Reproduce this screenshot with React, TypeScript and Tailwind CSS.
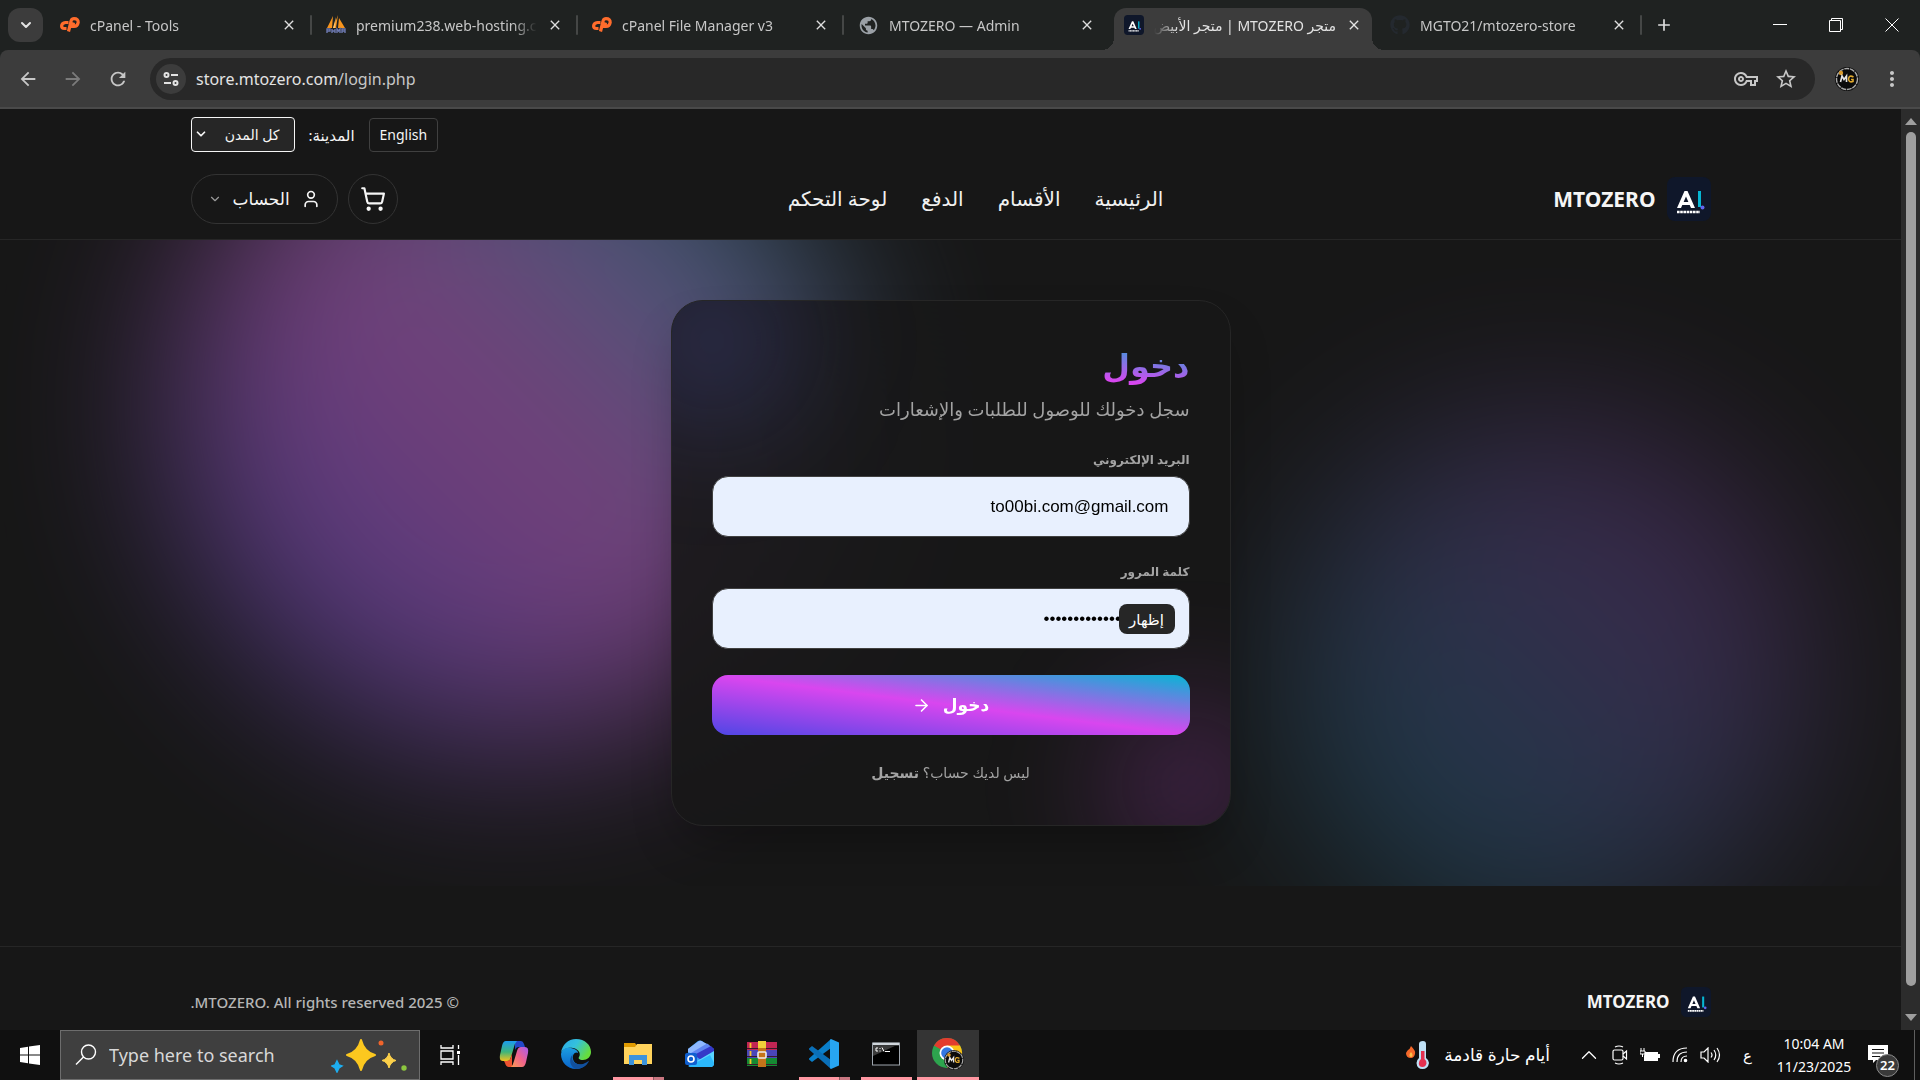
import type { ReactNode } from "react";
import {
  MdArrowBack,
  MdArrowForward,
  MdClose,
  MdMoreVert,
  MdOutlineVpnKey,
  MdPublic,
  MdRefresh,
  MdStarBorder,
  MdAdd,
} from "react-icons/md";
import { FaGithub } from "react-icons/fa";
import { ArrowRight, ChevronDown, ChevronUp, ShoppingCart, User } from "lucide-react";

function BrandMark({ className }: { className: string }) {
  return (
    <svg viewBox="0 0 44 44" className={className} aria-hidden="true">
      <rect width="44" height="44" rx="8" fill="#0f172a" />
      <path d="M10 31 L17.500 14 H20.500 L28 31 H24 L19 19.500 L14 31 Z M14.500 25 H24 V28 H13.500 Z" fill="#fff" />
      <rect x="31" y="14" width="3" height="16" fill="#06b6d4" />
      <circle cx="35.500" cy="30.500" r="2" fill="#6366f1" />
      <path d="M10 35 H33" stroke="#fff" strokeWidth="2.500" strokeDasharray="2.600 .6" />
    </svg>
  );
}

function PanelLogo() {
  return (
    <svg viewBox="0 0 20 20" className="size-5 shrink-0" fill="none" stroke="#ff6c2c" strokeWidth="3.200" aria-hidden="true">
      <path d="M8.500 7.500 H5.500 Q1.800 8 1.600 11 Q1.600 13.500 4.500 13.500 H6.500" />
      <path d="M8.500 16.500 L11.200 5.500 Q12 3.600 14 3.600 Q18.400 3.600 18.200 7.500 Q17.500 11.500 14 11.500 H12.500 L13.500 7.500" />
    </svg>
  );
}

function SailBoat() {
  return (
    <svg viewBox="0 0 20 20" className="size-5 shrink-0" aria-hidden="true">
      <path d="M7 1 L6 13 H1 Z M12 0 L10 13 H7 Z M13 3 L19 13 H12 Z" fill="#f7941d" />
      <path d="M10 2 L9 13 H7 Z" fill="#fbc36b" />
      <path d="M1 18 V14 H4 V16 H1 M6 14 V18 M6 16 H9 M9 14 V18 M11 18 V14 L12.500 16 L14 14 V18 M16 18 V14 H19 V18 M16 16 H19" fill="none" stroke="#6c78af" strokeWidth="1.400" />
    </svg>
  );
}

type TabProps = { icon: ReactNode; title: string; divider?: boolean };

function Tab({ icon, title, divider = true }: TabProps) {
  return (
    <div className="flex w-[266px] shrink items-center gap-2.5 pl-3.5">
      {icon}
      <span className="min-w-0 flex-1 overflow-hidden whitespace-nowrap [mask-image:linear-gradient(to_left,transparent,black_24px)]">
        {title}
      </span>
      <button aria-label={`Close ${title}`} className="mr-[3px] text-[#dedede]">
        <MdClose size={16} />
      </button>
      <span className={divider ? "h-5 w-0.5 rounded bg-[#454746]" : "w-0.5"} />
    </div>
  );
}

function TabStrip() {
  return (
    <div className="flex h-[50px] shrink-0 bg-[#1f2221] text-[14px] text-[#c7c7c7]">
      <div className="flex min-w-0 flex-1">
        <button aria-label="Search tabs" className="mt-2 mr-[3px] ml-2 flex h-[34px] w-[35px] shrink-0 items-center justify-center rounded-xl bg-[#3c3c3c] text-[#e3e3e3]">
          <ChevronDown size={16} strokeWidth={3} />
        </button>
        <Tab icon={<PanelLogo />} title="cPanel - Tools" />
        <Tab icon={<SailBoat />} title="premium238.web-hosting.c" />
        <Tab icon={<PanelLogo />} title="cPanel File Manager v3" />
        <Tab icon={<MdPublic size={21} color="#9aa0a6" className="shrink-0" />} title="MTOZERO — Admin" divider={false} />
        <div className="flex w-[266px] shrink">
          <span className="mt-[38px] -ml-2 h-3 w-3 shrink-0 bg-[radial-gradient(circle_at_0_0,#1f2221_12px,#3c3c3c_12px)]" />
          <div className="mt-2 flex min-w-0 flex-1 items-center gap-2.5 rounded-t-xl bg-[#3c3c3c] pr-2.5 pl-2.5 pb-2 text-[#e3e3e3]">
            <BrandMark className="size-5 shrink-0" />
            <span dir="rtl" className="min-w-0 flex-1 overflow-hidden whitespace-nowrap [mask-image:linear-gradient(to_right,transparent,black_24px)]">
              متجر MTOZERO | متجر الأبيض
            </span>
            <button aria-label="Close store tab">
              <MdClose size={16} />
            </button>
          </div>
          <span className="mt-[38px] -mr-2 h-3 w-3 shrink-0 bg-[radial-gradient(circle_at_100%_0,#1f2221_12px,#3c3c3c_12px)]" />
        </div>
        <Tab icon={<FaGithub size={20} color="#24292f" className="shrink-0" />} title="MGTO21/mtozero-store" />
        <button aria-label="New tab" className="ml-3 text-[#dedede]">
          <MdAdd size={20} />
        </button>
      </div>
      <div className="flex items-center text-white">
        <button aria-label="Minimize" className="flex w-14 justify-center">
          <svg width="14" height="14" viewBox="0 0 14 14"><path d="M0 6.500 H14" stroke="currentColor" /></svg>
        </button>
        <button aria-label="Restore" className="flex w-14 justify-center">
          <svg width="14" height="14" viewBox="0 0 14 14" fill="none" stroke="currentColor"><path d="M.5 2.500 H11.500 V13.500 H.5 Z M2.500 2.500 V.5 H13.500 V11.500 H11.500" /></svg>
        </button>
        <button aria-label="Close window" className="flex w-14 justify-center">
          <svg width="14" height="14" viewBox="0 0 14 14"><path d="M.5 .5 L13.500 13.500 M13.500 .5 L.5 13.500" stroke="currentColor" /></svg>
        </button>
      </div>
    </div>
  );
}

function Toolbar() {
  return (
    <div className="bg-[#1f2221]">
      <div className="flex h-[59px] shrink-0 items-center rounded-t-lg border-b-2 border-[#4a4a4a] bg-[#3c3c3c] text-[#c7c7c7]">
        <button aria-label="Back" className="ml-[17px]"><MdArrowBack size={22} /></button>
        <button aria-label="Forward" className="ml-[23px] text-[#7b7b7b]"><MdArrowForward size={22} /></button>
        <button aria-label="Reload" className="ml-[23px]"><MdRefresh size={22} /></button>
        <div className="ml-[21px] flex h-[42px] flex-1 items-center rounded-full bg-[#282828] pr-[17px] pl-1.5">
          <button aria-label="Site information" className="flex size-[30px] items-center justify-center rounded-full bg-[#3c3c3c] text-[#e3e3e3]">
            <svg width="16" height="16" viewBox="0 0 16 16" fill="none" stroke="currentColor" strokeWidth="2">
              <circle cx="3.500" cy="4" r="2" />
              <path d="M8 4 H15 M1 12 H8" />
              <circle cx="12.500" cy="12" r="2" />
            </svg>
          </button>
          <a href="https://store.mtozero.com/login.php" dir="ltr" className="ml-2.5 flex-1 text-[16px] text-[#e3e3e3]">
            store.mtozero.com<span className="text-[#c7c7c7]">/login.php</span>
          </a>
          <button aria-label="Passwords"><MdOutlineVpnKey size={24} /></button>
          <button aria-label="Bookmark" className="ml-4"><MdStarBorder size={24} /></button>
        </div>
        <button aria-label="Profile" className="ml-5">
          <MgBadge className="size-6" />
        </button>
        <button aria-label="Menu" className="mr-4 ml-[21px]"><MdMoreVert size={24} /></button>
      </div>
    </div>
  );
}

function MgBadge({ className }: { className: string }) {
  return (
    <svg viewBox="0 0 24 24" className={className} aria-hidden="true">
      <circle cx="12" cy="12" r="12" fill="#0b0b0b" />
      <circle cx="12" cy="12" r="10.500" fill="none" stroke="#a8a8a8" strokeWidth="1.400" strokeDasharray="5 .8" />
      <circle cx="6" cy="6" r="2.200" fill="#d99a2b" />
      <path d="M5.500 15 L7 9 L9 12.500 L11.500 9 V15" fill="none" stroke="#e6e6e6" strokeWidth="1.600" />
      <path d="M18.500 10 Q14 7.500 13.500 12 Q14 16 18 14.500 V12.500 H16" fill="none" stroke="#e0a92e" strokeWidth="1.600" />
    </svg>
  );
}

const navItems = ["الرئيسية", "الأقسام", "الدفع", "لوحة التحكم"];

function SiteHeader() {
  return (
    <header className="border-b border-[#262626]">
      <div className="mx-auto w-full max-w-[1520px]">
        <div className="flex items-center justify-end gap-3.5 pt-2 text-[#f5f5f5]">
          <a href="#en" className="rounded border border-[#404040] px-2.5 py-1.5 text-[14px] leading-5">English</a>
          <label htmlFor="city" className="text-[15px] leading-5">المدينة:</label>
          <div className="relative">
            <select id="city" className="h-[35px] w-[104px] appearance-none rounded border border-[#f5f5f5] bg-[#262626] pr-3.5 text-[14px]">
              <option>كل المدن</option>
            </select>
            <ChevronDown size={14} strokeWidth={3} className="pointer-events-none absolute top-2.5 left-[3px]" />
          </div>
        </div>
        <div className="flex items-center justify-between pt-[22px] pb-[15px]">
          <a href="#home" className="flex items-center gap-[11px]">
            <BrandMark className="size-11" />
            <span className="text-[21px] leading-7 font-bold text-[#f5f5f5]">MTOZERO</span>
          </a>
          <nav className="flex items-center gap-[34px] text-[20px] leading-7 text-[#f0f0f0]">
            {navItems.map((item) => (
              <a key={item} href="#nav">{item}</a>
            ))}
          </nav>
          <div className="flex items-center gap-2.5 text-[#f5f5f5]">
            <a href="#cart" aria-label="السلة" className="flex size-[50px] items-center justify-center rounded-full border border-[#333]">
              <ShoppingCart size={26} strokeWidth={2} />
            </a>
            <button className="flex h-[50px] items-center gap-[11px] rounded-full border border-[#333] px-4 text-[17px]">
              <User size={20} />
              <span>الحساب</span>
              <ChevronDown size={14} className="text-[#9a9a9a]" />
            </button>
          </div>
        </div>
      </div>
    </header>
  );
}

function LoginCard() {
  return (
    <section className="relative w-[560px] overflow-hidden rounded-[32px] border border-[#262626] bg-[#171717]/90 p-10 shadow-2xl shadow-black/30 backdrop-blur-3xl">
      <div className="absolute -top-10 -left-10 size-40 rounded-full bg-[#6366f1]/25 blur-3xl" />
      <div className="absolute -right-10 -bottom-10 size-40 rounded-full bg-[#d946ef]/25 blur-3xl" />
      <div className="relative">
        <h1 className="bg-linear-to-tr/srgb from-[#4f46e5] via-[#d946ef] to-[#06b6d4] bg-clip-text text-[32px] leading-[48px] font-extrabold text-transparent">دخول</h1>
        <p className="mt-2 text-[18px] leading-[25px] text-[#a3a3a3]">سجل دخولك للوصول للطلبات والإشعارات</p>
        <form className="mt-7" onSubmit={(e) => e.preventDefault()}>
          <label htmlFor="email" className="block text-[12px] leading-5 font-bold text-[#a3a3a3]">البريد الإلكتروني</label>
          <input
            id="email"
            type="text"
            defaultValue="to00bi.com@gmail.com"
            className="mt-1.5 block h-[61px] w-full rounded-2xl border border-[#404040] bg-[#e8f0fe] px-5 font-['Liberation_Sans',Arial,sans-serif] text-[17px] text-black"
          />
          <label htmlFor="password" className="mt-[25px] block text-[12px] leading-5 font-bold text-[#a3a3a3]">كلمة المرور</label>
          <div className="relative mt-1.5">
            <input
              id="password"
              type="password"
              defaultValue="passwordpasswordpassw"
              className="block h-[61px] w-full rounded-2xl border border-[#404040] bg-[#e8f0fe] px-5 font-['Liberation_Sans',Arial,sans-serif] text-[17px] text-black"
            />
            <button type="button" className="absolute top-4 right-[15px] h-[30px] w-14 rounded-lg bg-[#262626] text-[15px] leading-5 text-white">إظهار</button>
          </div>
          <button type="submit" className="mt-[26px] flex h-[60px] w-full items-center justify-center gap-3 rounded-2xl bg-linear-to-tr/srgb from-[#4f46e5] via-[#d946ef] to-[#06b6d4] text-[17px] font-bold text-white">
            <span>دخول</span>
            <ArrowRight size={19} />
          </button>
        </form>
        <p className="mt-[26px] text-center text-[14px] leading-6 text-[#a3a3a3]">
          ليس لديك حساب؟ <a href="#register" className="font-bold">تسجيل</a>
        </p>
      </div>
    </section>
  );
}

function Page() {
  return (
    <div className="flex min-h-0 flex-1 bg-[#171717]">
      <div dir="rtl" className="flex min-w-0 flex-1 flex-col overflow-hidden">
        <SiteHeader />
        <main className="relative flex shrink-0 justify-center overflow-hidden py-[60px]">
          <div className="absolute -top-[164px] left-[172px] size-[670px] rounded-full bg-linear-to-tr/srgb from-[#5b4fe0] via-[#d46add] to-[#22c3cc] opacity-50 blur-[84px]" />
          <div className="absolute right-[96px] -bottom-[52px] size-[520px] rounded-full bg-linear-to-tr/srgb from-[#06b6d4] to-[#d946ef] opacity-25 blur-[84px]" />
          <LoginCard />
        </main>
        <footer className="mt-[60px] shrink-0 border-t border-[#262626]">
          <div className="mx-auto flex w-full max-w-[1520px] items-center justify-between pt-10">
            <div className="flex items-center gap-[11px]">
              <BrandMark className="size-[30px]" />
              <span className="text-[17px] font-bold text-[#f5f5f5]">MTOZERO</span>
            </div>
            <p className="text-[15px] font-medium text-[#b5b5b5]">© 2025 MTOZERO. All rights reserved.</p>
          </div>
        </footer>
      </div>
      <div className="flex w-[19px] shrink-0 flex-col items-center justify-between bg-[#2c2c2c] py-2">
        <svg width="12" height="8" viewBox="0 0 12 8"><path d="M6 1 L12 8 H0 Z" fill="#9f9f9f" /></svg>
        <div className="my-[7px] mb-7 w-2.5 flex-1 rounded-full bg-[#9f9f9f]" />
        <svg width="12" height="8" viewBox="0 0 12 8"><path d="M6 7 L12 0 H0 Z" fill="#9f9f9f" /></svg>
      </div>
    </div>
  );
}

function CopilotIcon() {
  return (
    <svg viewBox="0 0 30 28" className="h-7 w-[30px]">
      <defs>
        <linearGradient id="cpa" x1="0" y1="0" x2="0" y2="1"><stop offset="0" stopColor="#1b9bf0" /><stop offset=".55" stopColor="#3fb57a" /><stop offset="1" stopColor="#f4c21c" /></linearGradient>
        <linearGradient id="cpb" x1="1" y1="0" x2="0" y2="1"><stop offset="0" stopColor="#a65cf0" /><stop offset=".5" stopColor="#f0628c" /><stop offset="1" stopColor="#fb9d50" /></linearGradient>
      </defs>
      <path d="M16 1 H22 Q24 1 25 4 L26 7 H20 Q17 7 16 10 Z" fill="#2348c9" />
      <path d="M7 1 H18 Q16 3 15 7 L12 17 Q11 21 8 21 H4 Q0 21 1 15 L3 6 Q4 1 7 1 Z" fill="url(#cpa)" />
      <path d="M8 21 Q11 21 12 17 L13 14 V27 H10 Q7 27 6 23 L5 21 Z" fill="#ee5230" />
      <path d="M23 27 H12 Q14 25 15 21 L18 11 Q19 7 22 7 H26 Q30 7 29 13 L27 22 Q26 27 23 27 Z" fill="url(#cpb)" />
    </svg>
  );
}

function EdgeIcon() {
  return (
    <svg viewBox="0 0 30 30" className="size-[30px]">
      <defs>
        <linearGradient id="eda" x1="0" y1="0" x2="1" y2=".5"><stop offset="0" stopColor="#2aa8e8" /><stop offset=".5" stopColor="#34c1dd" /><stop offset="1" stopColor="#66dd3c" /></linearGradient>
        <linearGradient id="edb" x1="0" y1="0" x2="0" y2="1"><stop offset="0" stopColor="#1b9de2" /><stop offset="1" stopColor="#0a63c9" /></linearGradient>
      </defs>
      <path d="M0 14 C1 6 7 0 15 0 C24 0 30 6 30 13 C30 18 26 21 22 21 C18 21 17 19 18 18 C20 15 18 10 12 9 C6 8 1 11 0 14 Z" fill="url(#eda)" />
      <path d="M0 15 C1 10 5 8 10 9 C15 10 17 12 17 14 C14 12 11 16 12 20 C13 25 19 27 26 25 C23 28 19 30 15 30 C6 30 0 23 0 15 Z" fill="url(#edb)" />
      <path d="M12 15 C9 20 13 27 22 25 C25 24 27 22 28 22 C26 27 20 30 15 30 C9 28 7 20 12 15 Z" fill="#12509d" />
    </svg>
  );
}

function ExplorerIcon() {
  return (
    <svg viewBox="0 0 28 24" className="h-6 w-7">
      <path d="M0 1 H11 L13 4 V8 H0 Z" fill="#e09a00" />
      <path d="M0 5 H11 L13 2 H28 V22 H0 Z" fill="#ffd35c" />
      <path d="M5 23 V13 H23 V23 H18 V18 H10 V23 Z" fill="#3c93dc" />
    </svg>
  );
}

function OutlookIcon() {
  return (
    <svg viewBox="0 0 30 28" className="h-7 w-[30px]">
      <path d="M3 9 L13 1 Q15 0 17 1 L29 9 V23 Q29 27 25 27 H7 Q3 27 3 23 Z" fill="#3aa0f5" />
      <path d="M3 9 L14 1 Q16 0 18 2 L24 5 L8 14 L3 12 Z" fill="#8fb8ff" />
      <path d="M6 13 L22 3.500 L26 6.500 L12 16 Z" fill="#5f86f2" />
      <path d="M9 15 L26 6 L29 9 V12 L16 20 Z" fill="#3438c8" />
      <path d="M29 11 L12 21 L20 27 H25 Q29 27 29 23 Z" fill="#59d5ff" />
      <path d="M3 27 L25 15 L29 23 Q29 27 25 27 Z" fill="#2bb7fb" />
      <rect y="13" width="12" height="12" rx="2" fill="#0f5fd0" />
      <circle cx="6" cy="19" r="3" fill="none" stroke="#fff" strokeWidth="1.600" />
    </svg>
  );
}

function WinrarIcon() {
  return (
    <svg viewBox="0 0 30 26" className="h-[26px] w-[30px]">
      <rect y="1" width="30" height="8" fill="#c22553" />
      <rect y="9" width="30" height="8" fill="#4a46b8" />
      <rect y="17" width="30" height="8" fill="#158a32" />
      <path d="M0 7.500 H30 M0 15.500 H30 M0 23.500 H30" stroke="#3a1a2a" strokeWidth="1" />
      <path d="M3.500 2 V7 M3.500 10 V15 M3.500 18 V23" stroke="#f6c62a" strokeWidth="1.800" />
      <rect x="11" width="8" height="26" fill="#c4741a" />
      <rect x="11" width="8" height="7" fill="#f0cf3a" />
      <rect x="11" y="11" width="8" height="6" rx="1" fill="none" stroke="#eee" strokeWidth="1.600" />
    </svg>
  );
}

function CodeIcon() {
  return (
    <svg viewBox="0 0 30 30" className="size-[30px]">
      <path d="M22 0 L22 9 L3 23 L0 20.500 V19.500 L22 0 Z" fill="#0a7fca" />
      <path d="M22 30 V21 L3 7 L0 9.500 V10.500 Z" fill="#0a6fb8" />
      <path d="M22 0 L30 3.500 V26.500 L22 30 L21 29 V1 Z" fill="#27a5f2" />
    </svg>
  );
}

function TerminalIcon() {
  return (
    <svg viewBox="0 0 28 24" className="h-6 w-7">
      <rect x=".5" y="1" width="27" height="22" fill="#000" stroke="#9ea5ad" />
      <path d="M1 2 H27" stroke="#cfd5db" strokeWidth="2.500" />
      <path d="M1 3.500 H24 L1 14 Z" fill="#3b3b3b" />
      <path d="M6 6 H4 V9 H6 M8 6 V7 M8 8.500 V9.500 M10 5.500 L12 9.500 M13 9.500 H18" stroke="#fff" fill="none" />
    </svg>
  );
}

function ChromeIcon() {
  return (
    <svg viewBox="0 0 32 32" className="size-8">
      <circle cx="15" cy="15" r="15" fill="#2da44e" />
      <path d="M15 15 L2 7.500 A15 15 0 0 1 28 7.500 Z" fill="#e33b2e" />
      <path d="M15 7.500 H28 A15 15 0 0 1 15 30 L21.500 18.500 Z" fill="#fbc116" />
      <circle cx="15" cy="15" r="7.500" fill="#fff" />
      <circle cx="15" cy="15" r="5.800" fill="#3377e3" />
      <svg x="12" y="12" width="20" height="20"><MgBadge className="size-5" /></svg>
    </svg>
  );
}

type TaskProps = { label: string; icon: ReactNode; line?: "one" | "many" | "active" };

function TaskButton({ label, icon, line }: TaskProps) {
  return (
    <button aria-label={label} className={line === "active" ? "flex w-[62px] flex-col items-center bg-[#343434]" : "flex w-[62px] flex-col items-center"}>
      <span className="flex h-[47px] items-center justify-center">{icon}</span>
      {line === "active" && <span className="h-[3px] w-full bg-[#ff97a2]" />}
      {line === "one" && <span className="h-[3px] w-[51px] bg-[#ff97a2]" />}
      {line === "many" && (
        <span className="flex h-[3px] w-[51px] gap-px bg-[#8a5a60]">
          <span className="w-10 bg-[#ff97a2]" />
          <span className="flex-1 bg-[#c97781]" />
        </span>
      )}
    </button>
  );
}

function Taskbar() {
  return (
    <footer className="flex h-[50px] shrink-0 bg-[#101010] text-white">
      <button aria-label="Start" className="flex w-[60px] items-center justify-center">
        <svg width="20" height="20" viewBox="0 0 20 20" fill="#fff"><path d="M0 3 L8 1.800 V9.500 H0 Z M9 1.600 L20 0 V9.500 H9 Z M0 10.500 H8 V18.200 L0 17 Z M9 10.500 H20 V20 L9 18.400 Z" /></svg>
      </button>
      <label className="flex w-[360px] items-center border border-[#6d6d6d] bg-[#3f3f3f]">
        <svg width="22" height="22" viewBox="0 0 22 22" className="ml-3.5 shrink-0" fill="none" stroke="#fff" strokeWidth="1.400"><circle cx="13.500" cy="8" r="7" /><path d="M8.500 13 L1 20.500" /></svg>
        <input aria-label="Search" placeholder="Type here to search" className="ml-3 min-w-0 flex-1 text-[18px] placeholder:text-[#d8d8d8]" />
        <svg width="78" height="36" viewBox="0 0 78 36" className="mr-2.5 shrink-0">
          <path d="M30 3 Q33 15 44 18 Q33 21 30 33 Q27 21 16 18 Q27 15 30 3 Z" fill="#fcc81f" stroke="#fcc81f" strokeWidth="2" strokeLinejoin="round" />
          <path d="M58 16 Q59.500 22 65 23.500 Q59.500 25 58 31 Q56.500 25 51 23.500 Q56.500 22 58 16 Z" fill="#fcd04a" stroke="#fcd04a" />
          <path d="M6 24 L8 28 L11 29 L8 31 L6 35 L4 31 L1 29 L4 28 Z" fill="#1eaef0" stroke="#1eaef0" strokeWidth="1.500" />
          <circle cx="50" cy="6" r="2.500" fill="#f0642b" />
          <circle cx="73" cy="31" r="2.700" fill="#8cc63f" />
        </svg>
      </label>
      <button aria-label="Task view" className="flex w-[60px] items-center justify-center">
        <svg width="20" height="20" viewBox="0 0 20 20" fill="none" stroke="#fff" strokeWidth="1.300"><path d="M1 0 V3 H13 V0 M1 6 H13 V14 H1 Z M1 20 V17 H13 V20 M18.500 0 V4 M18.500 10 V20" /><path d="M17 7.500 H20" strokeWidth="3" /></svg>
      </button>
      <div className="ml-[3px] flex">
        <TaskButton label="Copilot" icon={<CopilotIcon />} />
        <TaskButton label="Edge" icon={<EdgeIcon />} />
        <TaskButton label="File Explorer" icon={<ExplorerIcon />} line="many" />
        <TaskButton label="Outlook" icon={<OutlookIcon />} />
        <TaskButton label="WinRAR" icon={<WinrarIcon />} />
        <TaskButton label="Visual Studio Code" icon={<CodeIcon />} line="many" />
        <TaskButton label="Command Prompt" icon={<TerminalIcon />} line="one" />
        <TaskButton label="Chrome" icon={<ChromeIcon />} line="active" />
      </div>
      <div className="ml-auto flex items-center">
        <svg width="24" height="30" viewBox="0 0 24 30">
          <path d="M5 6 Q10 11 9 14 Q8 18 5 18 Q0 18 0 13 Q1 11 2 10 Q4 9 5 6 Z" fill="#f4682a" />
          <path d="M5 12 Q7 14 6.500 16 Q5 18 3.500 16 Q3 14 5 12 Z" fill="#fbc04a" />
          <path d="M13 4 Q13 1 17 1 Q20 1 20 4 V18 Q23 20 23 23 Q22 29 16.500 29 Q11 29 10.500 23 Q10.500 20 13 18 Z" fill="#bfe0f5" />
          <path d="M15 11 H18.500 V19 Q21 21 20.500 23.500 Q19.500 27 16.500 27 Q13 27 12.800 23.500 Q13 20 15 19 Z" fill="#e4304f" />
        </svg>
        <span dir="rtl" className="ml-3.5 text-[17px] leading-6">أيام حارة قادمة</span>
        <button aria-label="Show hidden icons" className="ml-[26px]"><ChevronUp size={26} strokeWidth={1.2} /></button>
        <svg width="16" height="20" viewBox="0 0 16 20" className="ml-2.5" fill="none" stroke="#fff" strokeWidth="1.200"><rect x="1" y="5" width="10" height="10" rx="1.500" /><path d="M11 9 L14.500 6 V14 L11 11 M3 2 Q7 0 11 2 M3 18 Q7 20 11 18" /></svg>
        <svg width="20" height="14" viewBox="0 0 20 14" className="ml-3"><path d="M5 4 H18 V6 H20 V10 H18 V13 H4 V8" fill="#fff" /><path d="M1 0 V3 M4 0 V3 M0 3 H5 V6 H0 Z M2.500 6 V9" stroke="#fff" fill="none" /></svg>
        <svg width="16" height="16" viewBox="0 0 16 16" className="ml-3" fill="none" stroke="#fff" strokeWidth="1.200"><path d="M1 15 Q1 1 15 1 M5 15 Q5 5 15 5 M9 15 Q9 9 15 9" /><circle cx="13.500" cy="13.500" r="1.200" fill="#fff" /></svg>
        <svg width="21" height="16" viewBox="0 0 21 16" className="ml-3" fill="none" stroke="#fff" strokeWidth="1.200"><path d="M1 5 H4 L8 1 V15 L4 11 H1 Z M11 5.500 Q13 8 11 10.500 M14 3 Q17.500 8 14 13 M17 1 Q22 8 17 15" /></svg>
        <span className="ml-[22px] text-[15px]">ع</span>
        <div className="ml-[22px] w-20 text-center text-[14px] leading-[23px] whitespace-nowrap">
          <div>10:04 AM</div>
          <div>11/23/2025</div>
        </div>
        <button aria-label="22 notifications" className="relative ml-3.5 h-[50px] w-[46px]">
          <svg width="20" height="18" viewBox="0 0 20 18" className="absolute top-[15px] left-0"><path d="M0 0 H20 V15 H8 L5 18 V15 H0 Z" fill="#fff" /><path d="M4 4.500 H16 M4 8 H16 M4 11.500 H12" stroke="#101010" strokeWidth="1.200" /></svg>
          <span className="absolute top-6 left-2 flex size-[23px] items-center justify-center rounded-full border border-[#8a8a8a] bg-[#3a3a3a] text-[13px] font-semibold">22</span>
        </button>
        <span className="h-full w-[6px] border-l border-[#5e5e5e]" />
      </div>
    </footer>
  );
}

export default function App() {
  return (
    <div className="flex h-screen flex-col overflow-hidden bg-[#171717] font-['Noto_Sans','DejaVu_Sans',sans-serif]">
      <TabStrip />
      <Toolbar />
      <Page />
      <Taskbar />
    </div>
  );
}
